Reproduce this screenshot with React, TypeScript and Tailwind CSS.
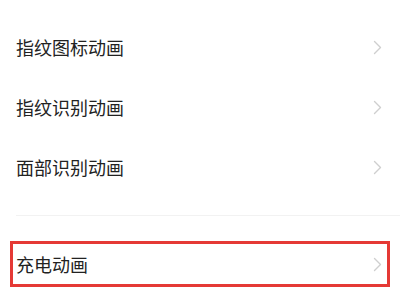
const items = ["指纹图标动画", "指纹识别动画", "面部识别动画"];

function Chevron() {
    return (
        <svg width="9" height="15" viewBox="0 0 9 15" fill="none" className="shrink-0">
            <polyline points="1.5,1.5 7.5,7.5 1.5,13.5" stroke="#cfcfcf" strokeWidth="1.4" strokeLinecap="round" strokeLinejoin="round" />
        </svg>
    );
}

export default function App() {
    return (
        <div
            className="w-[400px] h-[300px] bg-white overflow-hidden pt-[17px]"
            style={{ fontFamily: '"Noto Sans CJK SC", "Noto Sans", sans-serif' }}
        >
            {items.map((label) => (
                <div key={label} className="h-[60px] flex items-center justify-between pl-4 pr-[18px]">
                    <span className="text-[18px] text-[#222222] leading-none">{label}</span>
                    <Chevron />
                </div>
            ))}
            <div className="mt-[18px] ml-4 h-px bg-[#f2f2f2]" />
            <div className="mt-[25px] mx-[10px] h-[46px] border-[3px] border-[#e53935] flex items-center justify-between pl-[3px] pr-[5px]">
                <span className="text-[18px] text-[#222222] leading-none">充电动画</span>
                <Chevron />
            </div>
        </div>
    );
}
